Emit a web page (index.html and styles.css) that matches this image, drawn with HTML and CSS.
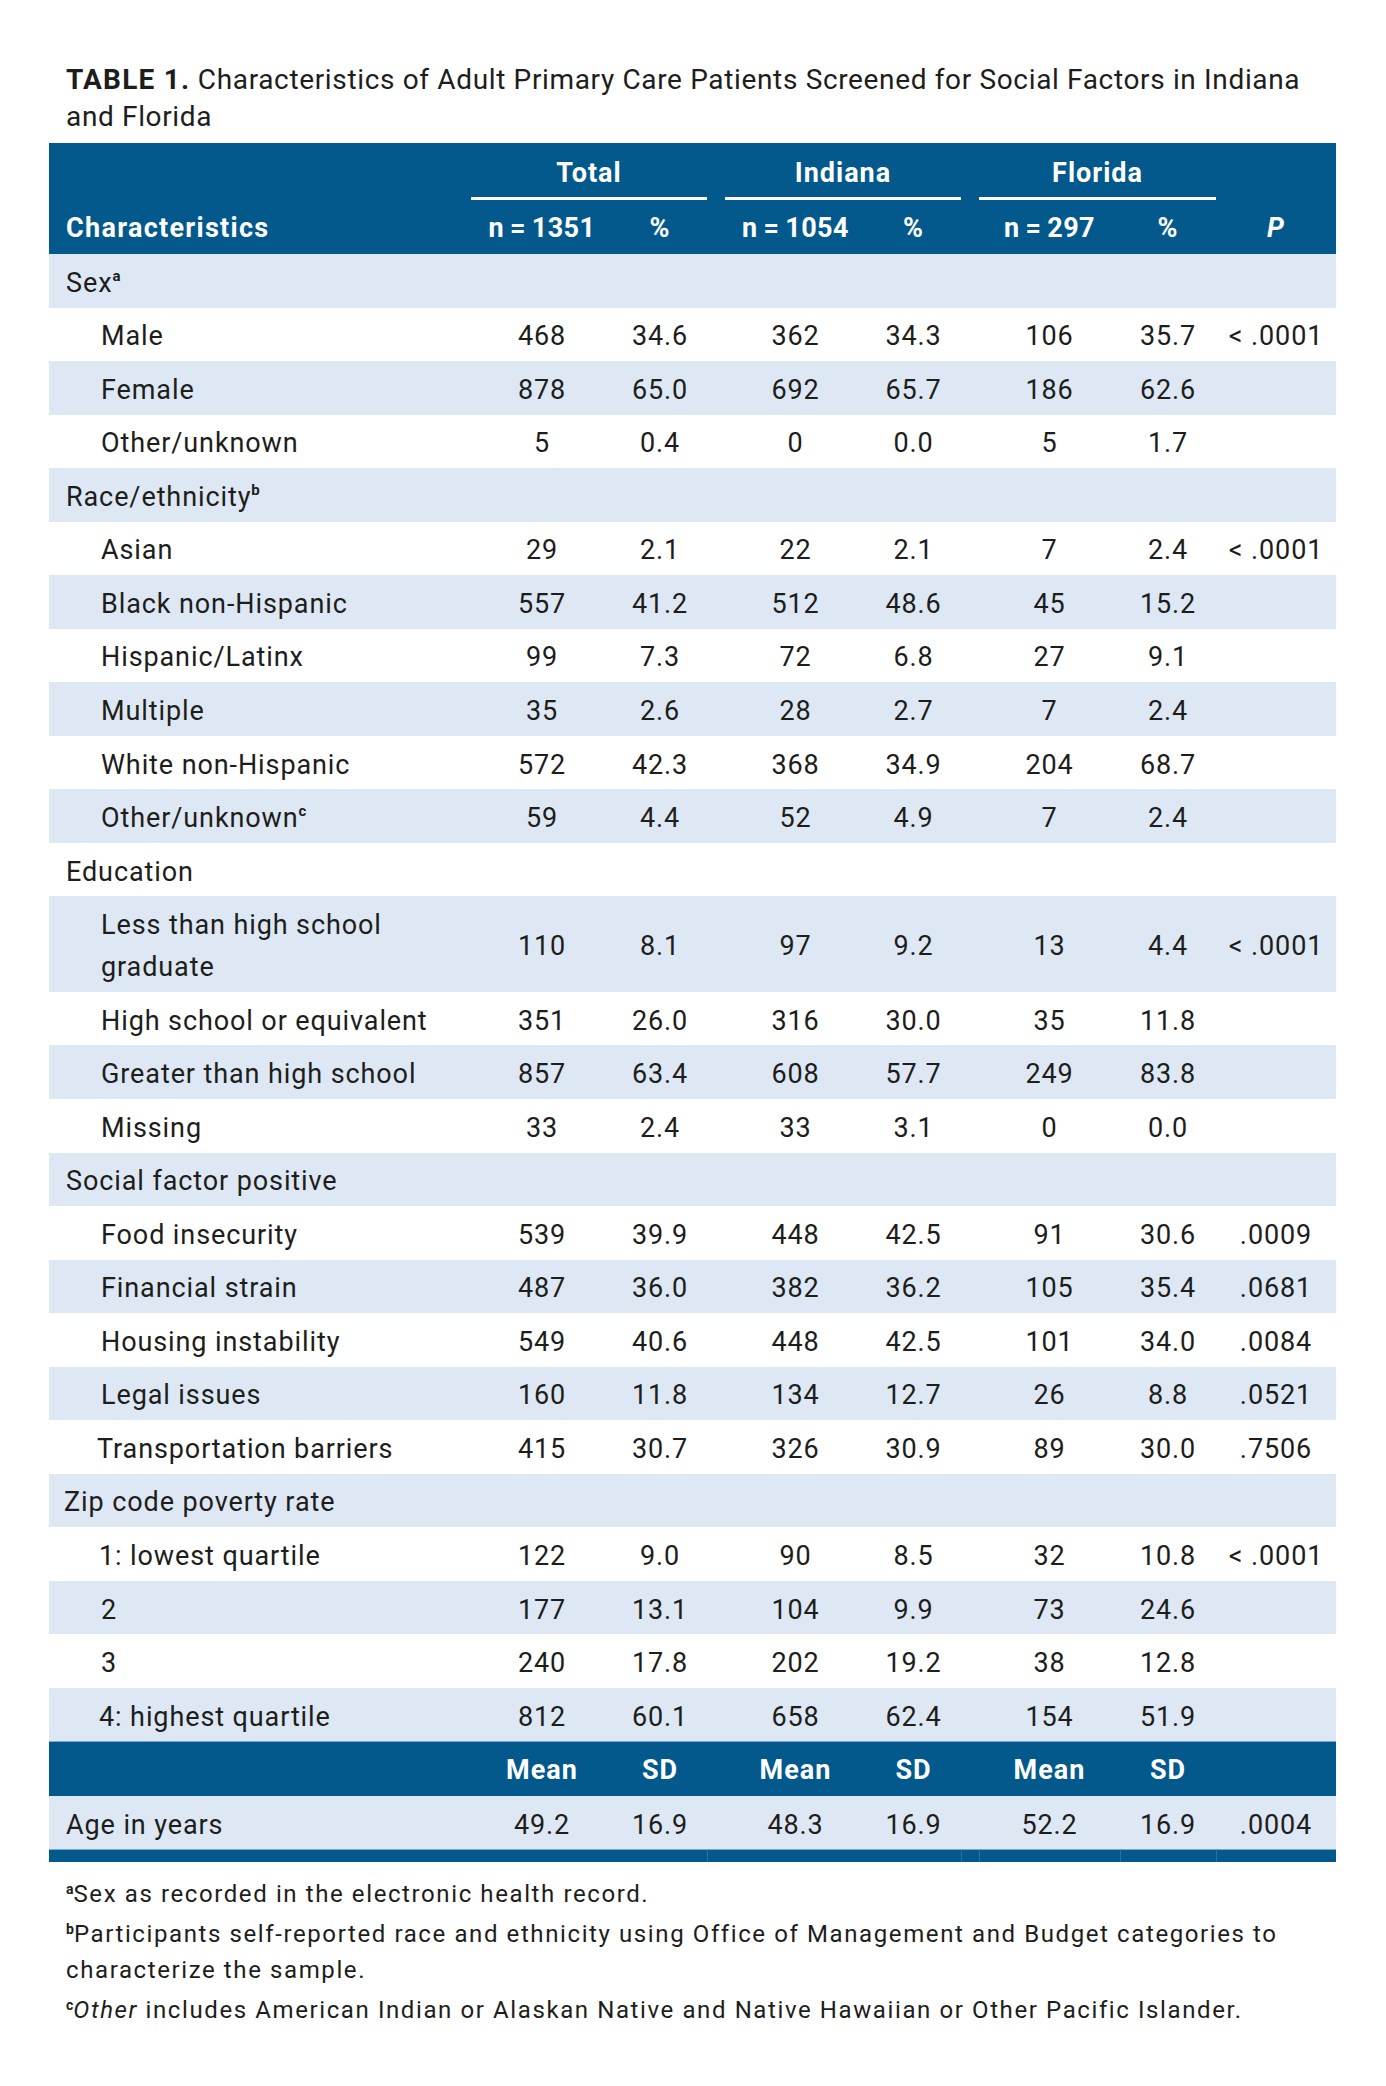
FILE: index.html
```html
<!DOCTYPE html>
<html lang="en">
<head>
<meta charset="utf-8">
<title>Table 1</title>
<link rel="stylesheet" href="styles.css">
</head>
<body>
<div class="page">
  <h1 class="title"><b>TABLE 1.</b> Characteristics of Adult Primary Care Patients Screened for Social Factors in Indiana<br>and Florida</h1>
  <table class="data">
    <colgroup>
      <col class="c-lbl"><col class="c-n"><col class="c-p"><col class="c-sp">
      <col class="c-n2"><col class="c-p2"><col class="c-sp">
      <col class="c-n2"><col class="c-p3"><col class="c-pv">
    </colgroup>
    <thead>
      <tr class="h1row">
        <th></th><th colspan="2" class="grp">Total</th><th></th>
        <th colspan="2" class="grp">Indiana</th><th></th>
        <th colspan="2" class="grp">Florida</th><th></th>
      </tr>
      <tr class="h2row">
        <th class="lbl">Characteristics</th><th class="nn">n&thinsp;=&thinsp;1351</th><th>%</th><th></th>
        <th class="nn">n&thinsp;=&thinsp;1054</th><th>%</th><th></th>
        <th class="nn">n&thinsp;=&thinsp;297</th><th>%</th><th><i>P</i></th>
      </tr>
    </thead>
    <tbody>
      <tr class="alt"><td class="cat">Sex<sup>a</sup></td><td colspan="9"></td></tr>
      <tr><td class="item">Male</td><td>468</td><td>34.6</td><td></td><td>362</td><td>34.3</td><td></td><td>106</td><td>35.7</td><td>&lt; .0001</td></tr>
      <tr class="alt"><td class="item">Female</td><td>878</td><td>65.0</td><td></td><td>692</td><td>65.7</td><td></td><td>186</td><td>62.6</td><td></td></tr>
      <tr><td class="item">Other/unknown</td><td>5</td><td>0.4</td><td></td><td>0</td><td>0.0</td><td></td><td>5</td><td>1.7</td><td></td></tr>
      <tr class="alt"><td class="cat">Race/ethnicity<sup>b</sup></td><td colspan="9"></td></tr>
      <tr><td class="item">Asian</td><td>29</td><td>2.1</td><td></td><td>22</td><td>2.1</td><td></td><td>7</td><td>2.4</td><td>&lt; .0001</td></tr>
      <tr class="alt"><td class="item">Black non-Hispanic</td><td>557</td><td>41.2</td><td></td><td>512</td><td>48.6</td><td></td><td>45</td><td>15.2</td><td></td></tr>
      <tr><td class="item">Hispanic/Latinx</td><td>99</td><td>7.3</td><td></td><td>72</td><td>6.8</td><td></td><td>27</td><td>9.1</td><td></td></tr>
      <tr class="alt"><td class="item">Multiple</td><td>35</td><td>2.6</td><td></td><td>28</td><td>2.7</td><td></td><td>7</td><td>2.4</td><td></td></tr>
      <tr><td class="item">White non-Hispanic</td><td>572</td><td>42.3</td><td></td><td>368</td><td>34.9</td><td></td><td>204</td><td>68.7</td><td></td></tr>
      <tr class="alt"><td class="item">Other/unknown<sup>c</sup></td><td>59</td><td>4.4</td><td></td><td>52</td><td>4.9</td><td></td><td>7</td><td>2.4</td><td></td></tr>
      <tr><td class="cat">Education</td><td colspan="9"></td></tr>
      <tr class="alt"><td class="item">Less than high school<br>graduate</td><td>110</td><td>8.1</td><td></td><td>97</td><td>9.2</td><td></td><td>13</td><td>4.4</td><td>&lt; .0001</td></tr>
      <tr><td class="item">High school or equivalent</td><td>351</td><td>26.0</td><td></td><td>316</td><td>30.0</td><td></td><td>35</td><td>11.8</td><td></td></tr>
      <tr class="alt"><td class="item">Greater than high school</td><td>857</td><td>63.4</td><td></td><td>608</td><td>57.7</td><td></td><td>249</td><td>83.8</td><td></td></tr>
      <tr><td class="item">Missing</td><td>33</td><td>2.4</td><td></td><td>33</td><td>3.1</td><td></td><td>0</td><td>0.0</td><td></td></tr>
      <tr class="alt"><td class="cat">Social factor positive</td><td colspan="9"></td></tr>
      <tr><td class="item">Food insecurity</td><td>539</td><td>39.9</td><td></td><td>448</td><td>42.5</td><td></td><td>91</td><td>30.6</td><td>.0009</td></tr>
      <tr class="alt"><td class="item">Financial strain</td><td>487</td><td>36.0</td><td></td><td>382</td><td>36.2</td><td></td><td>105</td><td>35.4</td><td>.0681</td></tr>
      <tr><td class="item">Housing instability</td><td>549</td><td>40.6</td><td></td><td>448</td><td>42.5</td><td></td><td>101</td><td>34.0</td><td>.0084</td></tr>
      <tr class="alt"><td class="item">Legal issues</td><td>160</td><td>11.8</td><td></td><td>134</td><td>12.7</td><td></td><td>26</td><td>8.8</td><td>.0521</td></tr>
      <tr><td class="item item-tight">Transportation barriers</td><td>415</td><td>30.7</td><td></td><td>326</td><td>30.9</td><td></td><td>89</td><td>30.0</td><td>.7506</td></tr>
      <tr class="alt"><td class="cat cat-tight">Zip code poverty rate</td><td colspan="9"></td></tr>
      <tr><td class="item item-q">1: lowest quartile</td><td>122</td><td>9.0</td><td></td><td>90</td><td>8.5</td><td></td><td>32</td><td>10.8</td><td>&lt; .0001</td></tr>
      <tr class="alt"><td class="item">2</td><td>177</td><td>13.1</td><td></td><td>104</td><td>9.9</td><td></td><td>73</td><td>24.6</td><td></td></tr>
      <tr><td class="item">3</td><td>240</td><td>17.8</td><td></td><td>202</td><td>19.2</td><td></td><td>38</td><td>12.8</td><td></td></tr>
      <tr class="alt"><td class="item item-q">4: highest quartile</td><td>812</td><td>60.1</td><td></td><td>658</td><td>62.4</td><td></td><td>154</td><td>51.9</td><td></td></tr>
      <tr class="mh"><th></th><th>Mean</th><th>SD</th><th></th><th>Mean</th><th>SD</th><th></th><th>Mean</th><th>SD</th><th></th></tr>
      <tr class="alt age"><td class="cat">Age in years</td><td>49.2</td><td>16.9</td><td></td><td>48.3</td><td>16.9</td><td></td><td>52.2</td><td>16.9</td><td>.0004</td></tr>
      <tr class="bar"><td></td><td></td><td></td><td class="vl"></td><td></td><td></td><td class="vl"></td><td class="vl"></td><td class="vl"></td><td class="vl"></td></tr>
    </tbody>
  </table>
  <div class="notes">
    <p><sup>a</sup>Sex as recorded in the electronic health record.</p>
    <p><sup>b</sup>Participants self-reported race and ethnicity using Office of Management and Budget categories to<br>characterize the sample.</p>
    <p><sup>c</sup><i>Other</i> includes American Indian or Alaskan Native and Native Hawaiian or Other Pacific Islander.</p>
  </div>
</div>
</body>
</html>
```
FILE: styles.css
```css
body {
  margin: 0;
  background: #ffffff;
  color: #1d1d1b;
  font-family: Roboto, "Liberation Sans", sans-serif;
}

.page {
  padding: 61px 50px 40px 49px;
}

.title {
  margin: 0 0 8px;
  padding-left: 17px;
  font-size: 28px;
  line-height: 37px;
  font-weight: 400;
  letter-spacing: 0.65px;
}

.title b {
  font-weight: 700;
  letter-spacing: 1.2px;
}

.data {
  width: 1287px;
  table-layout: fixed;
  border-collapse: separate;
  border-spacing: 0;
  font-size: 27px;
  letter-spacing: 0.9px;
}

.c-lbl { width: 422px; }
.c-n { width: 142px; }
.c-p { width: 94px; }
.c-sp { width: 18px; }
.c-n2 { width: 141px; }
.c-p2 { width: 95px; }
.c-p3 { width: 96px; }
.c-pv { width: 120px; }

.data th {
  background: #03598c;
  color: #ffffff;
  font-weight: 700;
  padding: 0;
  text-align: center;
  letter-spacing: 1px;
  white-space: nowrap;
}

.data th.nn { letter-spacing: 0.4px; }

.h1row { height: 57px; }
.h1row th { vertical-align: middle; line-height: 30px; }
.h1row th.grp {
  padding-top: 5px;
  border-bottom: 3px solid #ffffff;
}

.h2row { height: 54px; }
.h2row th { vertical-align: middle; line-height: 30px; padding-top: 2px; }
.h2row th.lbl { text-align: left; padding-left: 17px; letter-spacing: 1.3px; }

.data td {
  padding: 7.77px 0 3.77px;
  line-height: 42px;
  text-align: center;
  vertical-align: middle;
  white-space: nowrap;
}

.data tr.alt td { background: #dde8f4; }

.data td.cat { text-align: left; padding-left: 17px; }
.data td.cat-tight { padding-left: 15px; }
.data td.item { text-align: left; padding-left: 52px; }
.data td.item-tight { padding-left: 48px; }
.data td.item-q { padding-left: 50px; }

.data sup {
  font-size: 15px;
  font-weight: 700;
  line-height: 0;
  vertical-align: 11px;
  letter-spacing: 0;
}

.mh { height: 55px; }
.mh th {
  vertical-align: middle;
  line-height: 30px;
  padding-top: 2px;
  border-top: 1px solid #7ea7cf;
}

.data tr.age td { padding: 7.5px 0 3.5px; }
.data tr.age td.cat { padding-left: 17px; }

.data tr.bar td {
  height: 12px;
  padding: 0;
  line-height: 0;
  background: #03598c;
  border-top: 1px solid #7ea7cf;
}

.data tr.bar td.vl { border-left: 1px solid #2f719e; }

.notes {
  margin-top: 14px;
  padding-left: 17px;
  font-size: 24px;
  line-height: 36px;
  letter-spacing: 1.6px;
}

.notes p { margin: 0 0 4px; }

.notes sup {
  font-size: 14px;
  font-weight: 700;
  line-height: 0;
  vertical-align: 8px;
  letter-spacing: 0;
}
```
